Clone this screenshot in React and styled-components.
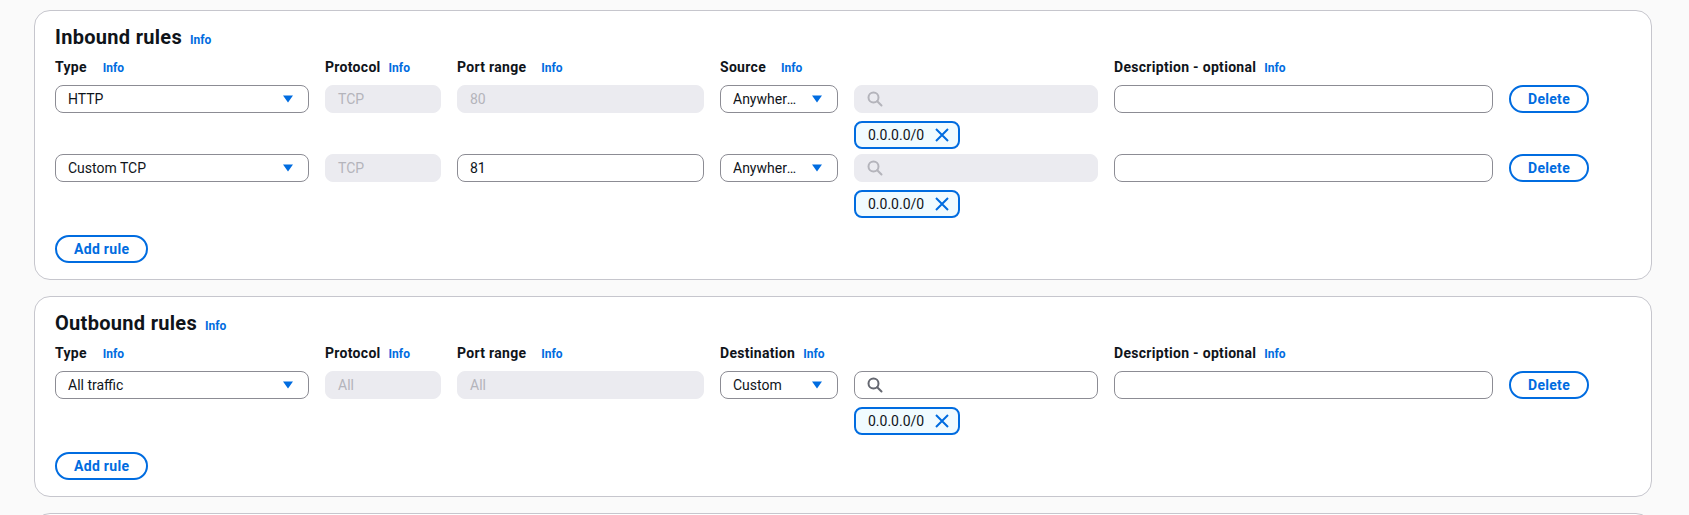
import React from "react";
import styled, { createGlobalStyle } from "styled-components";

const GlobalStyle = createGlobalStyle`
  body {
    margin: 0;
    background: #fafafa;
    font-family: Roboto, "Liberation Sans", sans-serif;
    color: #0f141a;
  }
`;

const Page = styled.div`
  display: flex;
  flex-direction: column;
  gap: 16px;
  padding: 10px 37px 0 34px;
`;

const Card = styled.section`
  background: #fff;
  border: 1px solid #c6c6cd;
  border-radius: 16px;
  padding: 14px 20px 16px;
  min-height: ${(p) => p.$minHeight || 0}px;
`;

const Title = styled.h2`
  margin: 0;
  font-size: 20px;
  line-height: 24px;
  font-weight: 700;
  letter-spacing: 0.3px;
`;

const Info = styled.a`
  margin-left: ${(p) => p.$gap ?? 8}px;
  font-size: 12px;
  line-height: 14px;
  font-weight: 700;
  letter-spacing: 0;
  color: #006ce0;
  text-decoration: none;
  cursor: pointer;
`;

const Grid = styled.div`
  display: grid;
  grid-template-columns: 254px 116px 247px 378px 379px auto;
  column-gap: 16px;
  align-items: start;
`;

const LabelRow = styled(Grid)`
  margin: 7px 0 7px;
`;

const Label = styled.div`
  font-size: 14px;
  line-height: 22px;
  font-weight: 700;
  letter-spacing: 0.3px;
  white-space: nowrap;
`;

const Rows = styled.div`
  display: flex;
  flex-direction: column;
  gap: 5px;
`;

const Field = styled.div`
  box-sizing: border-box;
  height: 28px;
  display: flex;
  align-items: center;
  gap: 8px;
  padding: 0 12px;
  border-radius: 8px;
  border: 1px solid ${(p) => (p.$disabled ? "#ebebf0" : "#8c8c94")};
  background: ${(p) => (p.$disabled ? "#ebebf0" : "#fff")};
  color: ${(p) => (p.$disabled ? "#b4b4bb" : "#0f141a")};
  font-size: 14px;
  line-height: 26px;
  overflow: hidden;
`;

const SelectBox = styled(Field)`
  padding-right: 15px;
  justify-content: space-between;
  gap: 14px;
  cursor: pointer;
`;

const SelectText = styled.span`
  flex: 1;
  min-width: 0;
  white-space: nowrap;
  overflow: hidden;
  text-overflow: ellipsis;
`;

const SourceCell = styled.div`
  display: grid;
  grid-template-columns: 118px 1fr;
  column-gap: 16px;
  row-gap: 8px;
`;

const Token = styled.div`
  grid-column: 2;
  justify-self: start;
  box-sizing: border-box;
  height: 28px;
  display: inline-flex;
  align-items: center;
  gap: 10px;
  padding: 0 8px 0 12px;
  border: 2px solid #006ce0;
  border-radius: 8px;
  background: #f0fbff;
  font-size: 14px;
  line-height: 24px;
`;

const Button = styled.button`
  box-sizing: border-box;
  height: 28px;
  padding: 0 17px;
  border: 2px solid #006ce0;
  border-radius: 20px;
  background: #fff;
  color: #006ce0;
  font: 700 14px/24px Roboto, "Liberation Sans", sans-serif;
  letter-spacing: 0.3px;
  justify-self: start;
  cursor: pointer;
`;

const Footer = styled.div`
  display: flex;
  margin-top: 17px;
`;

const Arrow = () => (
  <svg width="10" height="8" viewBox="0 0 10 8">
    <path d="M0 0.5 H10 L5 7.5 Z" fill="#006ce0" />
  </svg>
);

const SearchIcon = ({ color }) => (
  <svg width="16" height="16" viewBox="0 0 16 16" fill="none">
    <circle cx="6.5" cy="6.5" r="5" stroke={color} strokeWidth="2" />
    <path d="M10.2 10.2 L14.5 14.5" stroke={color} strokeWidth="2" strokeLinecap="round" />
  </svg>
);

const CloseIcon = () => (
  <svg width="16" height="16" viewBox="0 0 16 16" fill="none">
    <path d="M2 2 L14 14 M14 2 L2 14" stroke="#006ce0" strokeWidth="2" />
  </svg>
);

const Select = ({ value }) => (
  <SelectBox>
    <SelectText>{value}</SelectText>
    <Arrow />
  </SelectBox>
);

const RuleRow = ({ rule }) => (
  <Grid>
    <Select value={rule.type} />
    <Field $disabled>{rule.protocol}</Field>
    <Field $disabled={rule.portDisabled}>{rule.port}</Field>
    <SourceCell>
      <Select value={rule.source} />
      <Field $disabled={rule.searchDisabled}>
        <SearchIcon color={rule.searchDisabled ? "#b4b4bb" : "#656871"} />
      </Field>
      <Token>
        {rule.cidr}
        <CloseIcon />
      </Token>
    </SourceCell>
    <Field />
    <Button>Delete</Button>
  </Grid>
);

const RulesCard = ({ title, target, rules }) => (
  <Card>
    <Title>
      {title}
      <Info $gap={8}>Info</Info>
    </Title>
    <LabelRow>
      <Label>
        Type<Info $gap={16}>Info</Info>
      </Label>
      <Label>
        Protocol<Info>Info</Info>
      </Label>
      <Label>
        Port range<Info $gap={15}>Info</Info>
      </Label>
      <Label>
        {target.label}
        <Info $gap={target.gap}>Info</Info>
      </Label>
      <Label>
        Description - optional<Info>Info</Info>
      </Label>
    </LabelRow>
    <Rows>
      {rules.map((rule, i) => (
        <RuleRow key={i} rule={rule} />
      ))}
    </Rows>
    <Footer>
      <Button>Add rule</Button>
    </Footer>
  </Card>
);

const inbound = [
  {
    type: "HTTP",
    protocol: "TCP",
    port: "80",
    portDisabled: true,
    source: "Anywhere-IPv4",
    searchDisabled: true,
    cidr: "0.0.0.0/0",
  },
  {
    type: "Custom TCP",
    protocol: "TCP",
    port: "81",
    portDisabled: false,
    source: "Anywhere-IPv4",
    searchDisabled: true,
    cidr: "0.0.0.0/0",
  },
];

const outbound = [
  {
    type: "All traffic",
    protocol: "All",
    port: "All",
    portDisabled: true,
    source: "Custom",
    searchDisabled: false,
    cidr: "0.0.0.0/0",
  },
];

export default function App() {
  return (
    <>
      <GlobalStyle />
      <Page>
        <RulesCard
          title="Inbound rules"
          target={{ label: "Source", gap: 15 }}
          rules={inbound}
        />
        <RulesCard
          title="Outbound rules"
          target={{ label: "Destination", gap: 8 }}
          rules={outbound}
        />
        <Card $minHeight={120} />
      </Page>
    </>
  );
}
